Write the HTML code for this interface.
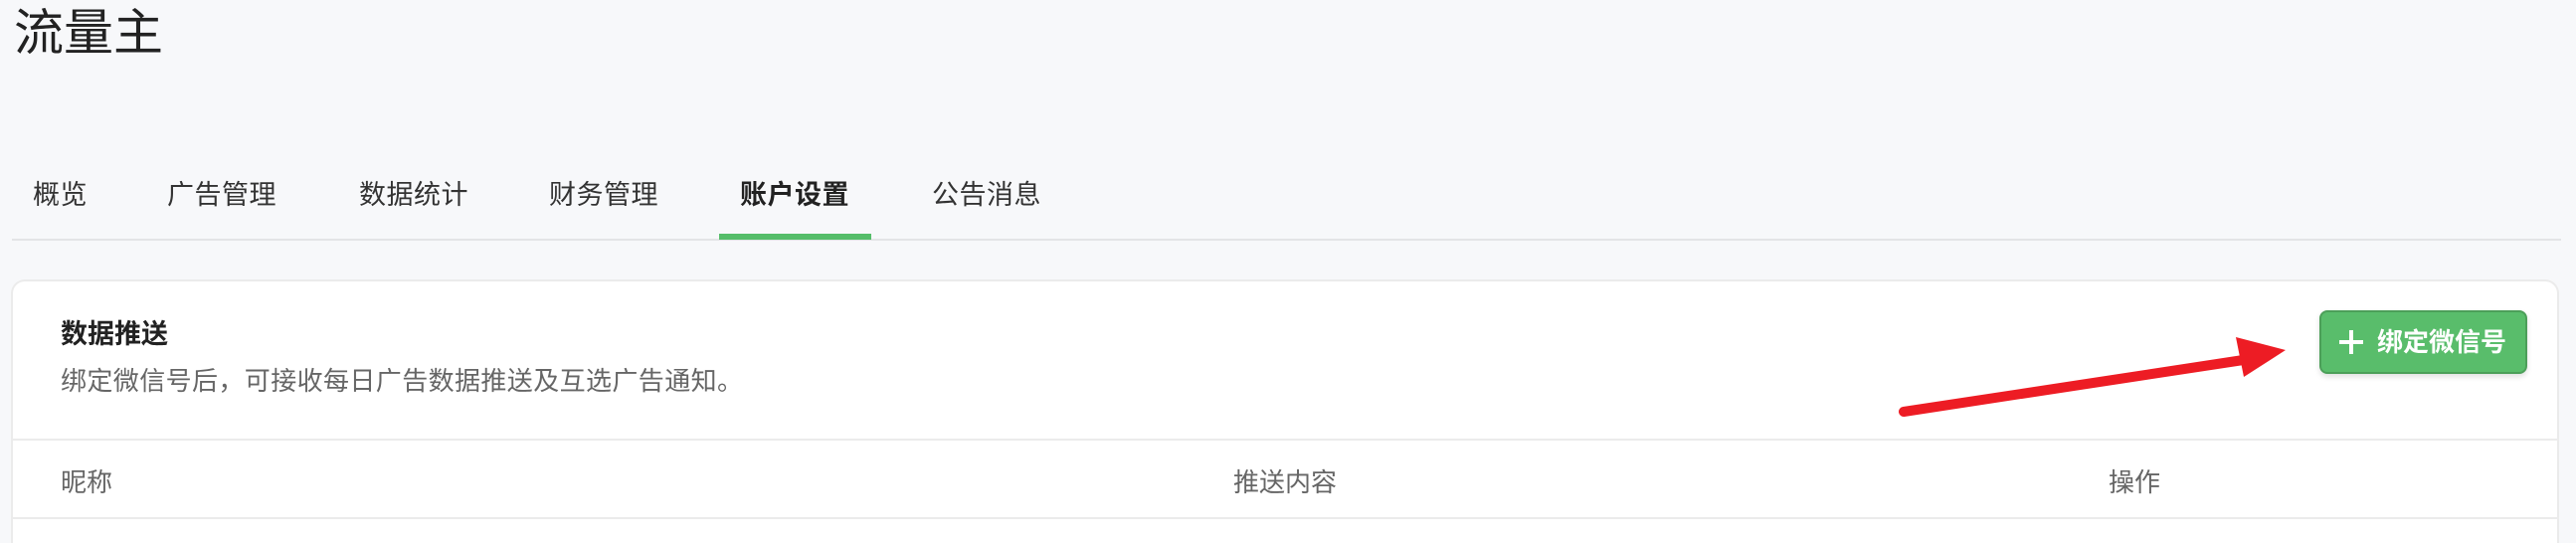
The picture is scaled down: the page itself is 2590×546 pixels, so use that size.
<!DOCTYPE html>
<html><head><meta charset="utf-8"><style>
*{margin:0;padding:0;box-sizing:border-box}
html{width:2590px;height:546px;overflow:hidden}
body{width:2590px;height:546px;background:#f7f8fa;font-family:"Liberation Sans","Noto Sans CJK SC",sans-serif;position:relative;overflow:hidden;color:#333}
.abs{position:absolute;white-space:nowrap;line-height:1}
.title{left:14px;top:8px;font-size:50px;color:#222}
.tab{top:183px;font-size:27px;color:#333;letter-spacing:0.5px}
.tab.on{font-weight:bold;color:#222}
.uline{left:12px;top:240px;width:2563px;height:2px;background:#e3e4e6}
.ind{left:723px;top:235px;width:153px;height:6px;background:#55bd69}
.card{left:11px;top:281px;width:2562px;height:265px;background:#fff;border:2px solid #ebebeb;border-bottom:none;border-radius:14px 14px 0 0}
.hline{left:12px;width:2560px;height:2px;background:#ebebeb}
.btn{left:2332px;top:312px;width:209px;height:64px;background:#59bd6b;border:2px solid #4c9f59;border-radius:8px;box-shadow:0 3px 6px rgba(0,0,0,0.12)}
</style></head><body>
<div class="abs title">流量主</div>
<div class="abs tab" style="left:33px">概览</div>
<div class="abs tab" style="left:168px">广告管理</div>
<div class="abs tab" style="left:361px">数据统计</div>
<div class="abs tab" style="left:552px">财务管理</div>
<div class="abs tab on" style="left:744px">账户设置</div>
<div class="abs tab" style="left:937px">公告消息</div>
<div class="abs uline"></div>
<div class="abs ind"></div>
<div class="abs card"></div>
<div class="abs" style="left:61px;top:323px;font-size:27px;font-weight:bold;color:#222">数据推送</div>
<div class="abs" style="left:61px;top:370px;font-size:26px;color:#666;letter-spacing:0.4px">绑定微信号后，可接收每日广告数据推送及互选广告通知。</div>
<div class="abs hline" style="top:441px"></div>
<div class="abs" style="left:61px;top:472px;font-size:26px;color:#666">昵称</div>
<div class="abs" style="left:1240px;top:472px;font-size:26px;color:#666">推送内容</div>
<div class="abs" style="left:2120px;top:472px;font-size:26px;color:#666">操作</div>
<div class="abs hline" style="top:520px"></div>
<div class="abs btn"></div>
<svg class="abs" style="left:2350px;top:330px" width="28" height="28"><path d="M14 2V26M2 14H26" stroke="#fff" stroke-width="4"/></svg>
<div class="abs" style="left:2390px;top:331px;font-size:26px;color:#fff;font-weight:bold">绑定微信号</div>
<svg class="abs" style="left:0;top:0" width="2590" height="546">
<line x1="1914" y1="414" x2="2262" y2="361" stroke="#ed1c24" stroke-width="10" stroke-linecap="round"/>
<polygon points="2298,352 2248,339 2256,379" fill="#ed1c24"/>
</svg>
</body></html>
